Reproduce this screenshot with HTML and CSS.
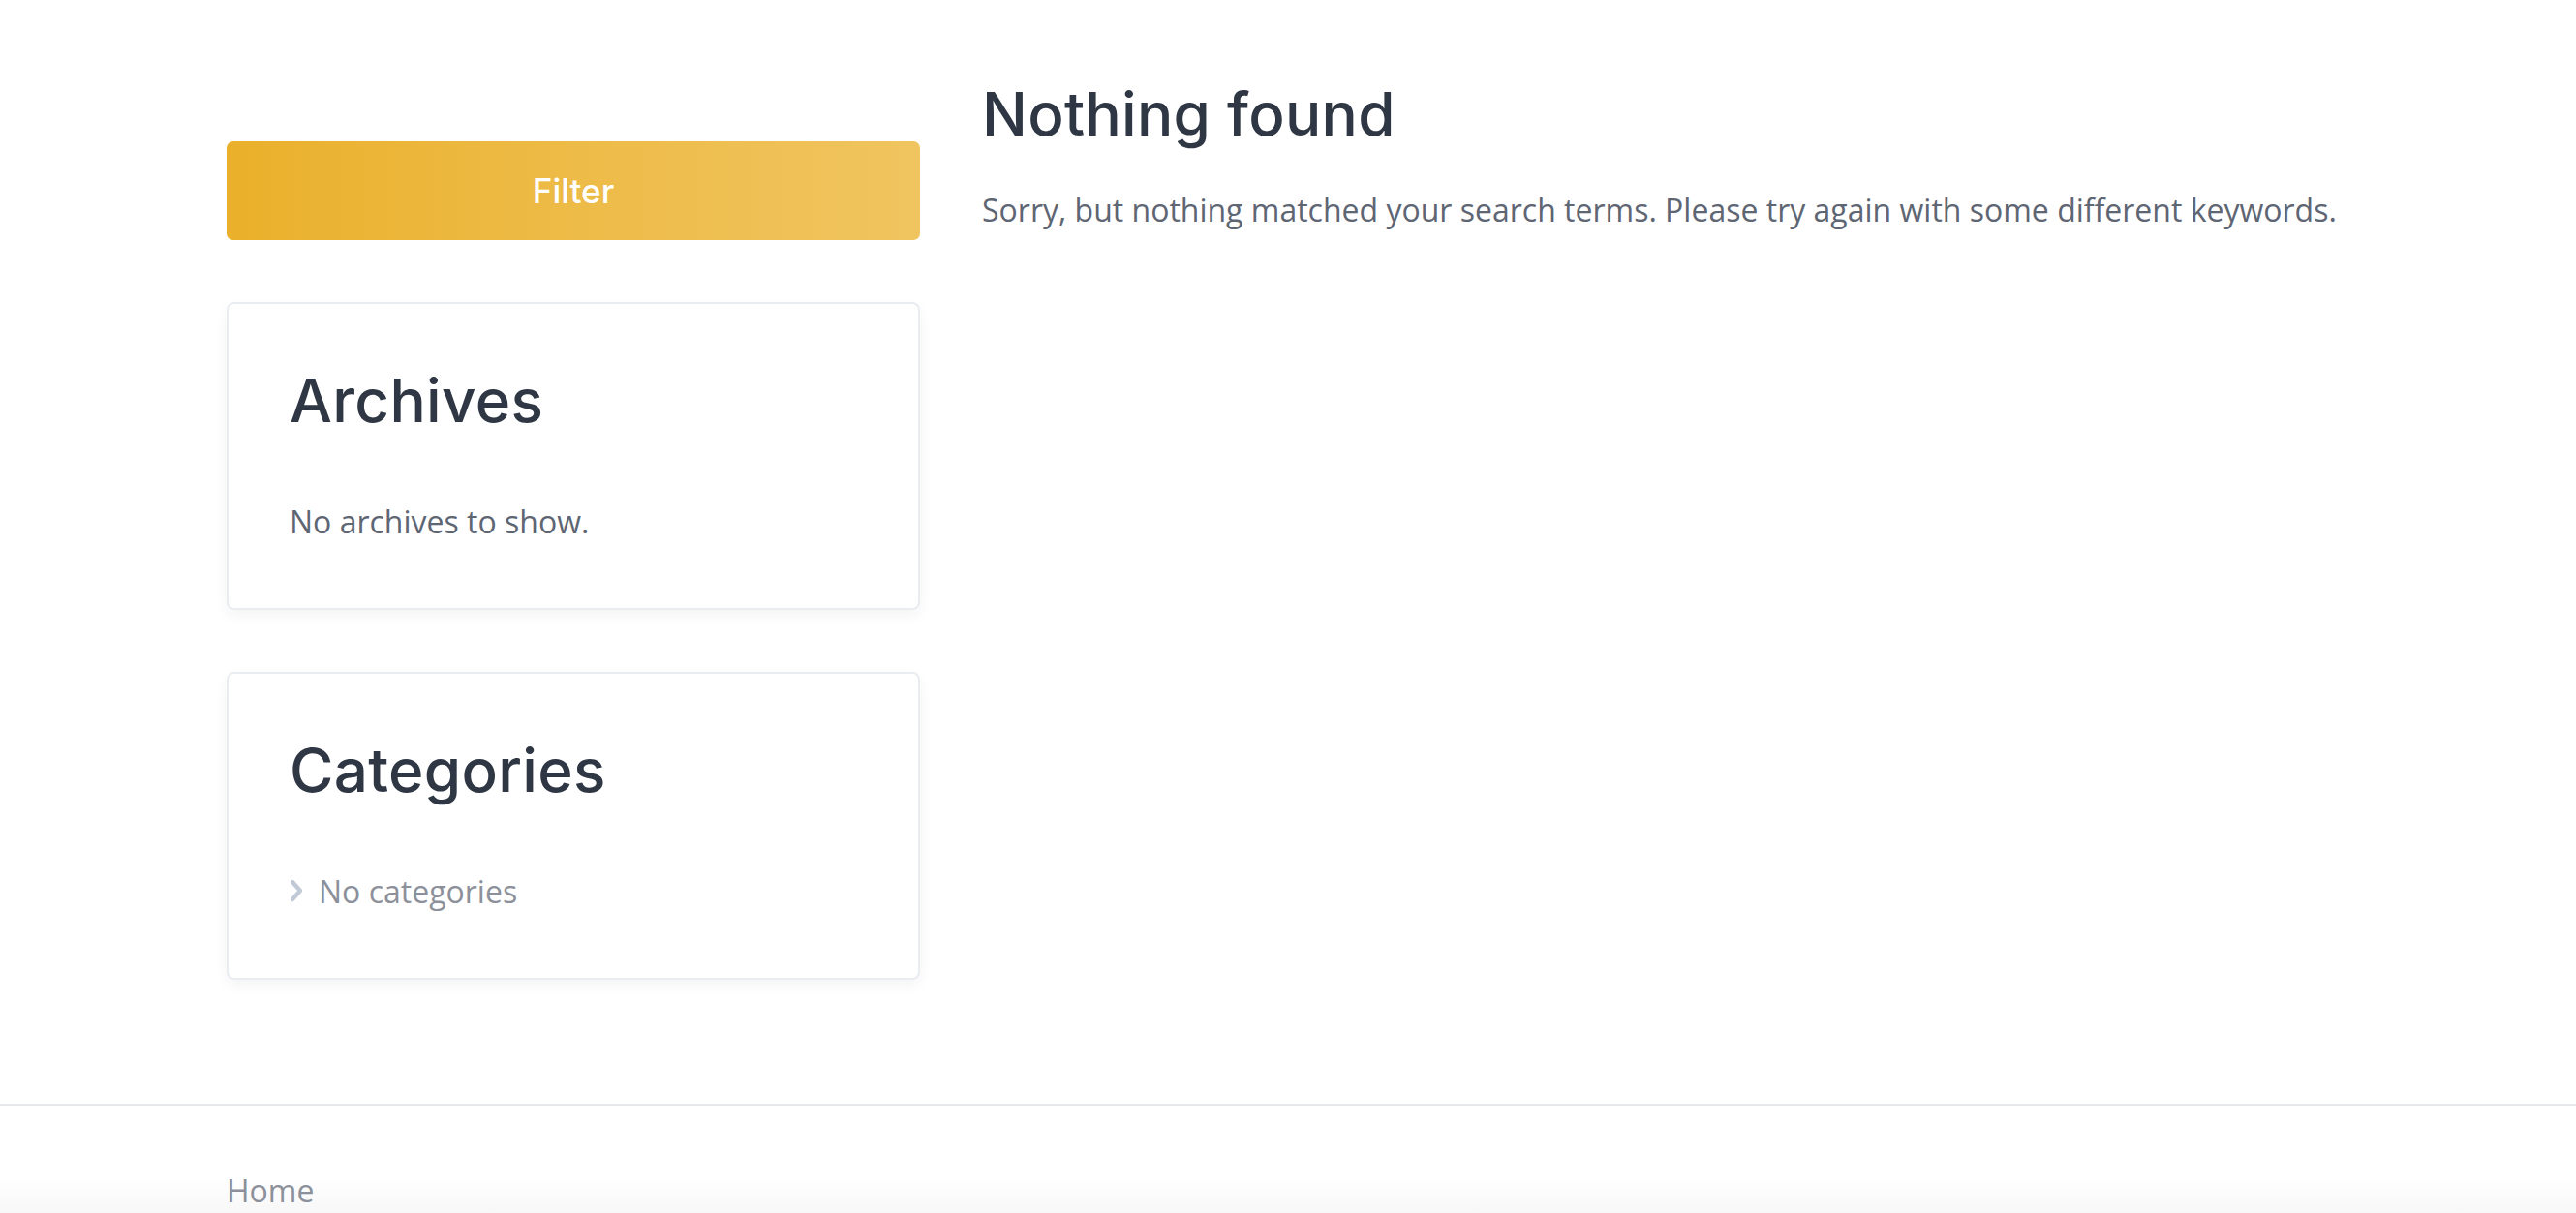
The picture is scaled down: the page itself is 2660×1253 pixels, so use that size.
FILE: index.html
```html
<!DOCTYPE html>
<html lang="en">
<head>
<meta charset="utf-8">
<title>Nothing found</title>
<link rel="stylesheet" href="styles.css">
</head>
<body>
<div class="page">
  <div class="container">
    <aside class="sidebar">
      <button class="filter-btn" type="button">Filter</button>
      <section class="widget">
        <h2 class="widget-title">Archives</h2>
        <p class="widget-text">No archives to show.</p>
      </section>
      <section class="widget">
        <h2 class="widget-title">Categories</h2>
        <ul class="cat-list">
          <li class="cat-item">
            <svg class="chev" viewBox="0 0 16 26" width="16" height="26" aria-hidden="true"><path d="M4 4 L12 13 L4 22" fill="none" stroke="#c3cad7" stroke-width="4.4" stroke-linecap="round" stroke-linejoin="round"/></svg>
            <span>No categories</span>
          </li>
        </ul>
      </section>
    </aside>
    <main class="content">
      <h1 class="page-title">Nothing found</h1>
      <p class="lead">Sorry, but nothing matched your search terms. Please try again with some different keywords.</p>
    </main>
  </div>
  <footer class="footer">
    <div class="footer-inner">
      <a class="footer-link" href="#">Home</a>
    </div>
  </footer>
</div>
</body>
</html>
```
FILE: styles.css
```css
* { box-sizing: border-box; }
html, body { margin: 0; padding: 0; background: #ffffff; }
body {
  font-family: "Open Sans", "Noto Sans", sans-serif;
  font-size: 32px;
  line-height: 48px;
  color: #5e6573;
  overflow: hidden;
}
.page { width: 2660px; }
.container {
  width: 2192px;
  margin: 0 auto;
  display: flex;
  gap: 64px;
  padding: 81px 0 128px;
}
.sidebar {
  width: 716px;
  flex: 0 0 716px;
  padding-top: 65px;
  display: flex;
  flex-direction: column;
  gap: 64px;
}
.filter-btn {
  height: 102px;
  border: 0;
  border-radius: 7px;
  background: linear-gradient(90deg, #eab02b 0%, #edbb47 50%, #f0c45f 100%);
  color: #ffffff;
  font-family: Inter, "Open Sans", sans-serif;
  font-weight: 500;
  font-size: 35px;
  display: flex;
  align-items: center;
  justify-content: center;
  padding: 0;
  margin: 0;
}
.widget {
  border: 2px solid #e9edf2;
  border-radius: 8px;
  padding: 63px 63px 65px;
  background: #fff;
  box-shadow: 0 6px 14px rgba(30, 40, 60, 0.05);
}
.widget-title {
  margin: 0 0 64px;
  font-family: Inter, "Open Sans", sans-serif;
  font-weight: 500;
  font-size: 62px;
  line-height: 74px;
  color: #2f3744;
  letter-spacing: 0.3px;
}
.widget-text { margin: 0; color: #5e6573; }
.cat-list { list-style: none; margin: 0; padding: 0; }
.cat-item {
  display: flex;
  align-items: center;
  gap: 15px;
  color: #8c909a;
}
.chev { display: block; flex: 0 0 16px; margin-top: -2px; margin-left: -1px; }
.content { flex: 1; }
.page-title {
  margin: 0;
  font-family: Inter, "Open Sans", sans-serif;
  font-weight: 500;
  font-size: 62px;
  line-height: 74px;
  color: #2f3744;
  letter-spacing: 0.3px;
}
.lead { margin: 38px 0 0; color: #5e6573; }
.footer {
  border-top: 2px solid #e6eaef;
  background: linear-gradient(180deg, #ffffff 0px, #ffffff 72px, #f6f6f7 120px);
  height: 200px;
}
.footer-inner {
  width: 2192px;
  margin: 0 auto;
  padding-top: 64px;
}
.footer-link { color: #8c909a; text-decoration: none; }
```
